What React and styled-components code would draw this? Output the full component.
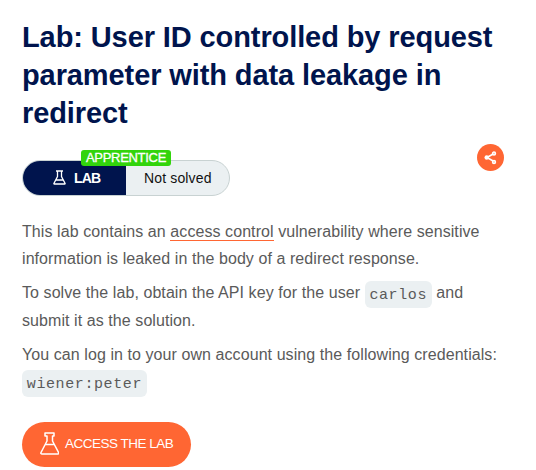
import React from "react";
import styled, { createGlobalStyle } from "styled-components";

const GlobalStyle = createGlobalStyle`
  * { box-sizing: border-box; }
  body {
    margin: 0;
    background: #fff;
    color: #5a5a5a;
    font-family: "Liberation Sans", Arial, sans-serif;
  }
`;

const Page = styled.main`
  width: 536px;
  height: 470px;
  padding: 18px 32px 0 22px;
  overflow: hidden;
`;

const Title = styled.h1`
  margin: 0;
  color: #00144d;
  font-size: 29px;
  line-height: 38px;
  font-weight: 700;
  letter-spacing: -0.1px;
  white-space: nowrap;
`;

const StatusRow = styled.div`
  display: flex;
  justify-content: space-between;
  align-items: flex-start;
  margin-top: 12px;
  height: 74px;
`;

const Status = styled.div`
  position: relative;
  display: flex;
  width: 208px;
  height: 36px;
  margin-top: 16px;
  border: 1px solid #c8d2d2;
  border-radius: 18px;
  background: #ebf0f2;
`;

const LabType = styled.div`
  display: flex;
  align-items: center;
  gap: 8px;
  width: 103px;
  padding: 0 0 1px 30px;
  border-radius: 17px 0 0 17px;
  background: #00144d;
  color: #fff;
  font-size: 14px;
  font-weight: 700;
  letter-spacing: -0.8px;
`;

const Solved = styled.div`
  display: flex;
  align-items: center;
  padding: 0 0 0 18px;
  color: #111;
  font-size: 14px;
  letter-spacing: 0.15px;
  white-space: nowrap;
`;

const Level = styled.span`
  position: absolute;
  left: 58px;
  top: -11px;
  width: 90px;
  height: 16px;
  border-radius: 3px;
  background: #32d40c;
  color: #fff;
  font-size: 13px;
  line-height: 15px;
  letter-spacing: -0.3px;
  text-align: center;
  -webkit-text-stroke: 0.3px #fff;
`;

const ShareButton = styled.button`
  display: grid;
  place-items: center;
  width: 27px;
  height: 27px;
  padding: 0;
  border: 0;
  border-radius: 50%;
  background: #ff6633;
  color: #fff;
`;

const Copy = styled.p`
  margin: 0 0 ${({ $gap }) => $gap}px;
  font-size: 16px;
  line-height: 27.2px;
  letter-spacing: 0.075px;
  white-space: nowrap;
`;

const TopicLink = styled.a`
  border-bottom: 1px solid #ff6633;
  color: inherit;
  text-decoration: none;
`;

const Code = styled.code`
  display: inline-block;
  height: 27px;
  margin: ${({ $block }) => ($block ? "1px 0 0" : "-1px 0")};
  padding: 0 4.8px;
  border-radius: 6px;
  background: #ebf0f2;
  font-family: "Liberation Mono", monospace;
  font-size: 15px;
  line-height: 29px;
  letter-spacing: 0.6px;
  vertical-align: middle;
`;

const AccessButton = styled.button`
  display: flex;
  align-items: center;
  gap: 6px;
  width: 169px;
  height: 45px;
  margin-top: 25px;
  padding: 0 0 2px 18px;
  border: 0;
  border-radius: 23px;
  background: #ff6633;
  color: #fff;
  font-family: inherit;
  font-size: 13.5px;
  letter-spacing: -0.5px;
  white-space: nowrap;
`;

const Flask = () => (
  <svg width="19" height="23" viewBox="0 0 19 23" fill="none" stroke="currentColor" strokeWidth="1.5" strokeLinejoin="round">
    <path d="M5 1h9v3h-1.500v5l6 11.500c.4 1-.1 1.500-1 1.500H2c-.9 0-1.400-.5-1-1.500L7 9V4H5zM5 12.500h9" />
  </svg>
);

const SmallFlask = () => (
  <svg width="13" height="15" viewBox="0 0 13 15" fill="none" stroke="currentColor" strokeWidth="1.3">
    <path d="M3 1h7M4.500 1v5.500L.9 13.400q-.2.6.4.6h10.400q.6 0 .4-.6L8.500 6.500V1M3 10h7" />
  </svg>
);

const ShareIcon = () => (
  <svg width="13" height="14" viewBox="0 0 13 14" fill="none" stroke="currentColor">
    <path d="M10 2.500 3 6.500l7 4" strokeWidth="1.6" />
    <circle cx="2.700" cy="6.500" r="2.2" fill="currentColor" stroke="none" />
    <circle cx="10" cy="2.500" r="1.5" strokeWidth="1.4" fill="#ffb59c" />
    <circle cx="10" cy="11" r="1.5" strokeWidth="1.4" fill="#ffb59c" />
  </svg>
);

export default function App() {
  return (
    <>
      <GlobalStyle />
      <Page>
        <Title>Lab: User ID controlled by request<br />parameter with data leakage in<br />redirect</Title>
        <StatusRow>
          <Status>
            <LabType><SmallFlask />LAB</LabType>
            <Solved>Not solved</Solved>
            <Level>APPRENTICE</Level>
          </Status>
          <ShareButton aria-label="Share"><ShareIcon /></ShareButton>
        </StatusRow>
        <Copy $gap={7}>
          This lab contains an <TopicLink>access control</TopicLink> vulnerability where sensitive<br />
          information is leaked in the body of a redirect response.
        </Copy>
        <Copy $gap={7}>
          To solve the lab, obtain the API key for the user <Code>carlos</Code> and<br />
          submit it as the solution.
        </Copy>
        <Copy $gap={0}>
          You can log in to your own account using the following credentials:<br />
          <Code $block>wiener:peter</Code>
        </Copy>
        <AccessButton><Flask />ACCESS THE LAB</AccessButton>
      </Page>
    </>
  );
}
